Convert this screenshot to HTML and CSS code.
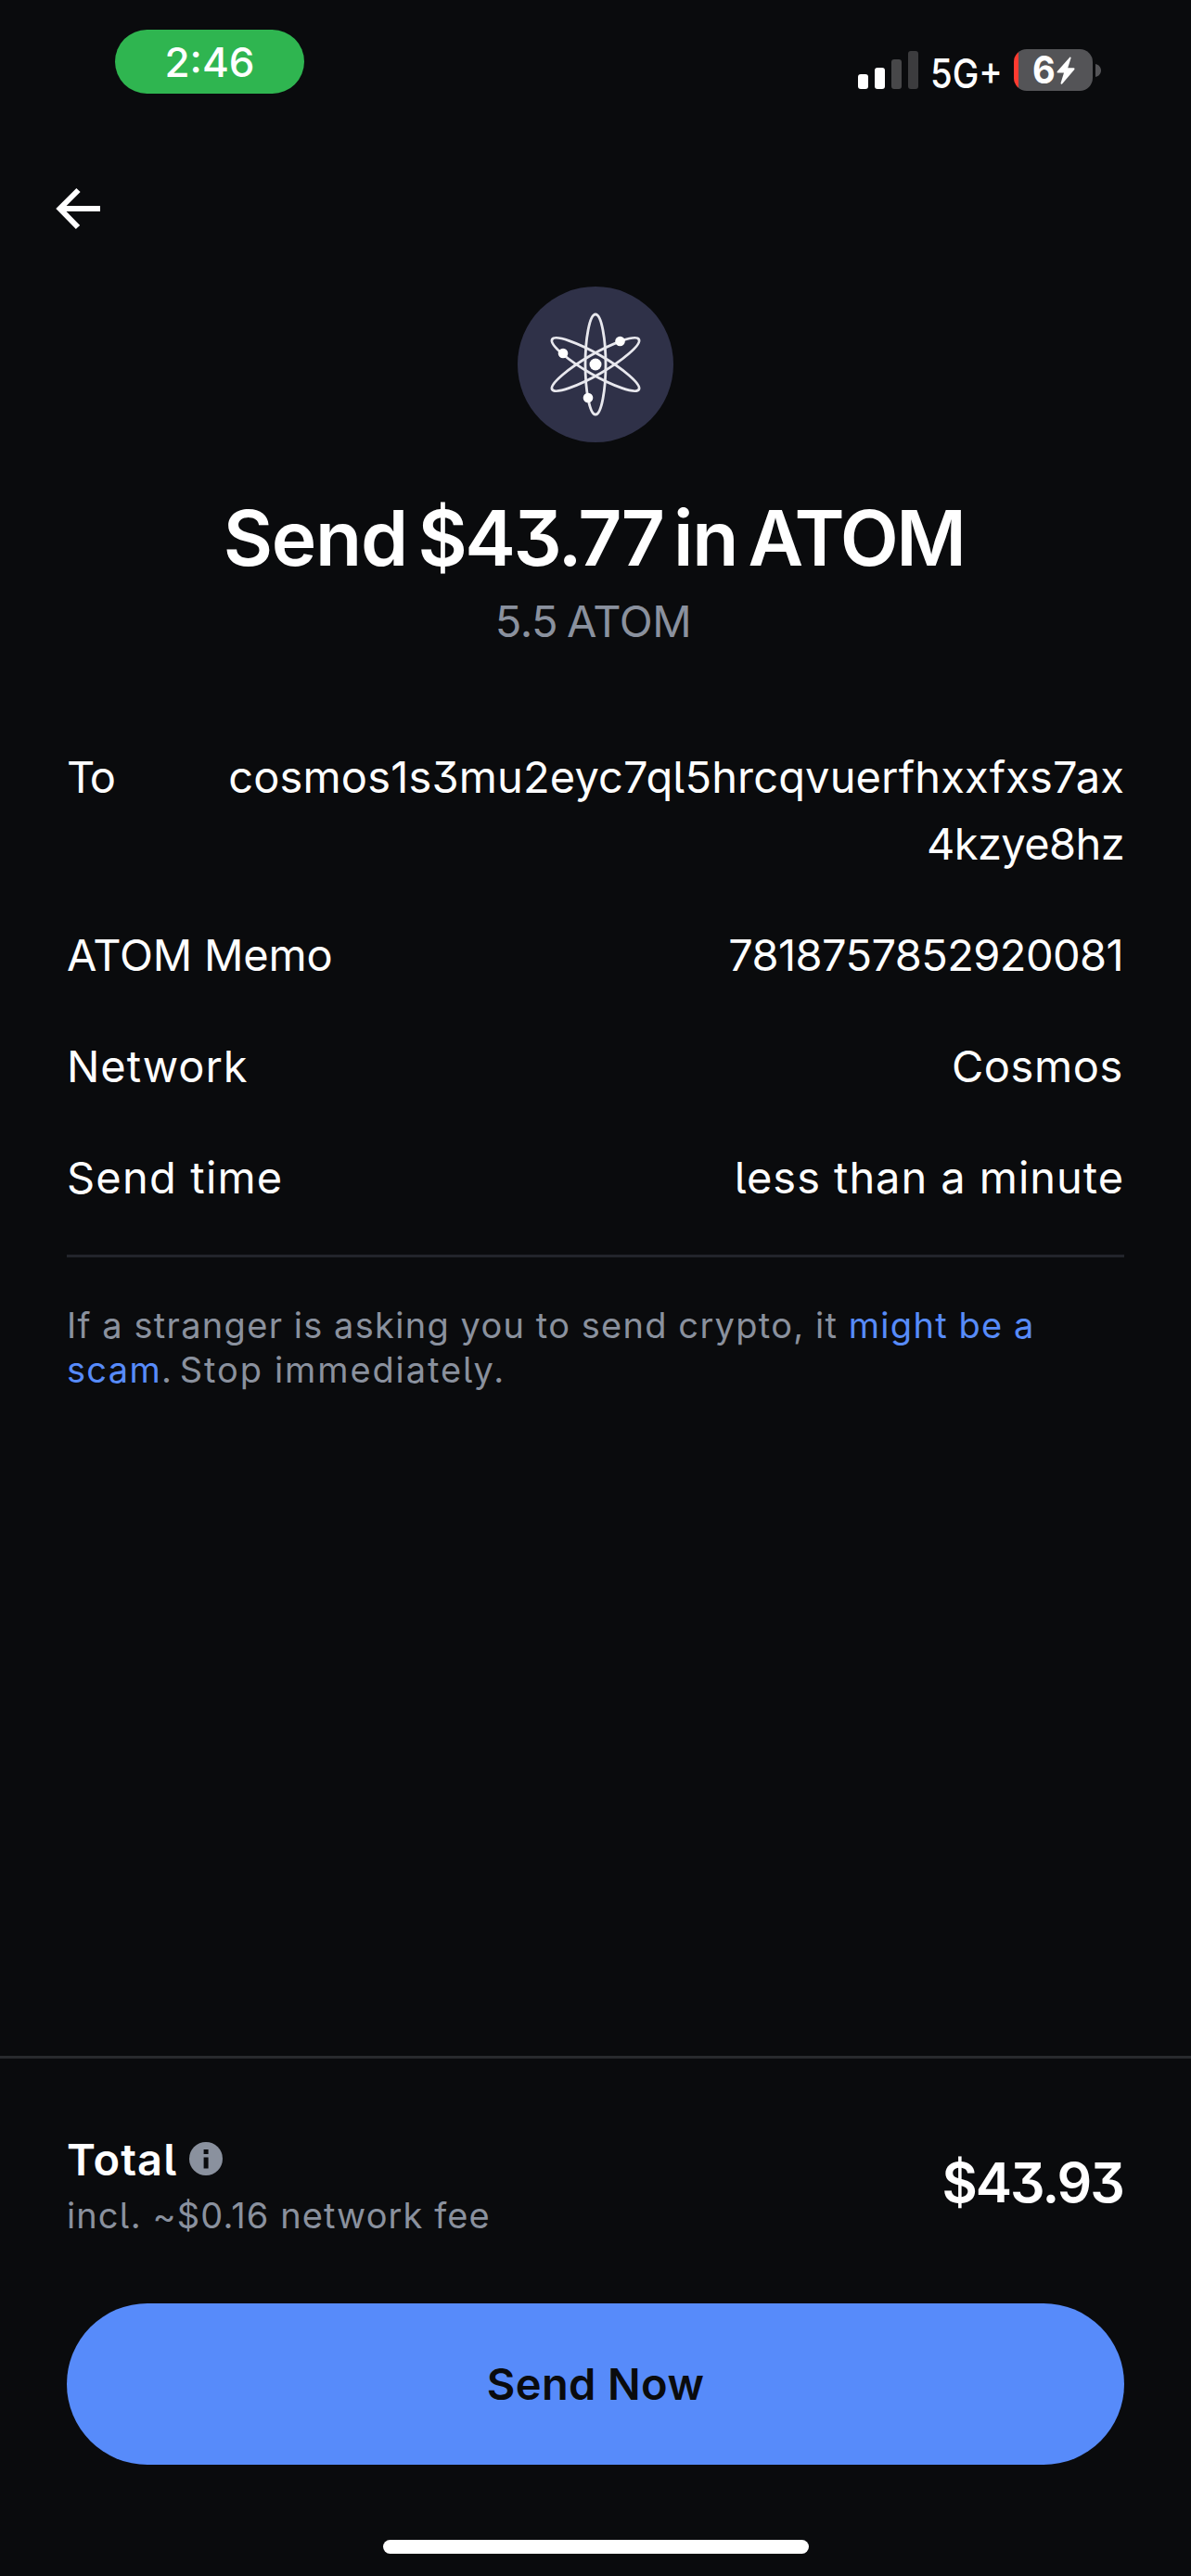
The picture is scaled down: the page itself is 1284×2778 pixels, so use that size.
FILE: index.html
```html
<!DOCTYPE html>
<html lang="en">
<head>
<meta charset="utf-8">
<title>Send ATOM</title>
<link rel="stylesheet" href="styles.css">
</head>
<body>
<div class="screen">
  <header class="status">
    <div class="clock">2:46</div>
    <div class="indicators">
      <svg class="signal" width="65" height="41" viewBox="0 0 65 41">
        <rect x="0" y="25" width="11" height="16" rx="3" fill="#fff"/>
        <rect x="18" y="18" width="11" height="23" rx="3" fill="#fff"/>
        <rect x="36" y="9" width="11" height="32" rx="3" fill="#474749"/>
        <rect x="54" y="0" width="11" height="41" rx="3" fill="#3c3c3e"/>
      </svg>
      <span class="carrier">5G+</span>
      <div class="battery">
        <div class="cell">
          <span class="percent">6</span>
          <svg class="bolt" width="20" height="30" viewBox="0 0 20 30"><path d="M14.5 .5 L.8 16 Q0 17.6 1.6 17.6 H8 L4.5 28.8 Q5 30.4 6.3 29.2 L19.3 14 Q20 12.2 18.4 12.2 H12.2 L15.6 1.6 Q15.6 .2 14.5 .5 Z" fill="#fff"/></svg>
        </div>
        <svg class="nub" width="6" height="14" viewBox="0 0 6 14"><path d="M0 0 C8 2 8 12 0 14 Z" fill="#545457"/></svg>
      </div>
    </div>
  </header>

  <nav class="nav">
    <svg width="49" height="46" viewBox="0 0 49 46" fill="none" stroke="#fff" stroke-width="6"><path d="M48 23 H6"/><path d="M24.5 3 L4.5 23 L24 43"/></svg>
  </nav>

  <main class="main">
    <section class="hero">
      <svg class="logo" width="168" height="168" viewBox="-84 -84 168 168">
        <circle r="84" fill="#2f3148"/>
        <g fill="none" stroke="#e8e8ee" stroke-width="2.8">
          <path id="orbit" d="M0 -54 C6.5 -54 11 -27 11 0 S6.5 54 0 54 S-11 27 -11 0 S-6.5 -54 0 -54 Z"/>
          <use href="#orbit" transform="rotate(60)"/>
          <use href="#orbit" transform="rotate(-60)"/>
        </g>
        <g fill="#fff">
          <circle r="6.5"/>
          <circle cx="26.5" cy="-25" r="5.3"/>
          <circle cx="-35" cy="-12" r="5.3"/>
          <circle cx="-8" cy="36" r="5.3"/>
        </g>
      </svg>
      <h1 class="title">Send <span class="tight">$43.77</span> in <span class="tight">ATOM</span></h1>
      <p class="subtitle">5.5 ATOM</p>
    </section>

    <dl class="details">
      <div class="row"><dt class="to">To</dt><dd class="address">cosmos1s3mu2eyc7ql5hrcqvuerfhxxfxs7ax<br><span class="tail">4kzye8hz</span></dd></div>
      <div class="row"><dt class="plain">ATOM Memo</dt><dd class="memo">7818757852920081</dd></div>
      <div class="row"><dt>Network</dt><dd class="network">Cosmos</dd></div>
      <div class="row"><dt class="time">Send time</dt><dd>less than a minute</dd></div>
    </dl>

    <p class="warning">If a stranger is asking you to send crypto, it <a class="link">might be a<br>scam</a>. <span class="stop">Stop immediately.</span></p>
  </main>

  <footer class="footer">
    <div class="summary">
      <div>
        <div class="total">Total
          <svg class="info" width="36" height="36" viewBox="0 0 36 36"><circle cx="18" cy="18" r="18" fill="#8a919e"/><path d="M15.6 8h5v5h-5zM15.6 16.5h5v12h-5z" fill="#0a0b0d"/></svg>
        </div>
        <div class="fee">incl. ~$0.16 network fee</div>
      </div>
      <div class="amount">$43.93</div>
    </div>
    <button class="send">Send Now</button>
    <div class="home"></div>
  </footer>
</div>
</body>
</html>
```
FILE: styles.css
```css
* { box-sizing: border-box; margin: 0; padding: 0; }

body {
  background: #0a0b0d;
  color: #fff;
  font-family: Inter, "Liberation Sans", sans-serif;
  font-feature-settings: "cv05", "cv09";
}

svg { display: block; flex: none; }

.screen {
  width: 1284px;
  height: 2778px;
  display: flex;
  flex-direction: column;
  overflow: hidden;
}

/* Status bar */
.status {
  height: 125px;
  padding: 32px 97px 0 124px;
  display: flex;
  justify-content: space-between;
  align-items: flex-start;
}
.clock {
  width: 204px;
  height: 69px;
  border-radius: 35px;
  background: #2fb550;
  font-size: 44px;
  font-weight: 500;
  line-height: 71px;
  text-align: center;
  font-feature-settings: normal;
}
.indicators { display: flex; padding-top: 21px; }
.signal { margin: 2px 13px 0 0; }
.carrier {
  width: 76px;
  margin-right: 14px;
  font-size: 44px;
  line-height: 52px;
  font-weight: 500;
  transform: scaleX(.87);
  transform-origin: left;
  white-space: nowrap;
}
.battery { display: flex; align-items: center; gap: 3px; height: 45px; }
.cell {
  width: 85px;
  height: 45px;
  border-radius: 14px;
  background: linear-gradient(to right, #ff3b30 5px, #545457 5px);
  display: flex;
  align-items: center;
  justify-content: center;
}
.percent {
  font-size: 41px;
  font-weight: 700;
  line-height: 45px;
  transform: scaleX(.93);
}

/* Navigation */
.nav { height: 184px; padding: 77px 0 0 60px; }

/* Heading */
.hero { display: flex; flex-direction: column; align-items: center; }
.title {
  margin-top: 56px;
  padding-right: 4px;
  font-size: 82px;
  line-height: 96px;
  font-weight: 600;
  letter-spacing: -1.2px;
  word-spacing: -8px;
  white-space: nowrap;
}
.tight { letter-spacing: -2.5px; }
.subtitle {
  margin-top: 5px;
  padding-right: 5px;
  font-size: 47px;
  line-height: 72px;
  letter-spacing: -.4px;
  word-spacing: -3px;
  color: #8a919e;
}

/* Details */
.main { flex: 1; padding: 0 72px; }
.details {
  margin-top: 96px;
  padding-bottom: 47px;
  border-bottom: 3px solid #22242b;
  display: flex;
  flex-direction: column;
  gap: 48px;
  font-size: 47px;
  line-height: 72px;
  letter-spacing: .95px;
}
.row { display: flex; justify-content: space-between; }
.row dd { text-align: right; white-space: nowrap; }
.row .to { letter-spacing: -2px; }
.row .address { letter-spacing: .15px; }
.row .tail { letter-spacing: -.6px; }
.row .plain { letter-spacing: -.2px; }
.row .memo { letter-spacing: -.6px; padding-right: 1px; }
.row .network { letter-spacing: .6px; padding-right: 1px; }
.row .time { letter-spacing: 1.2px; }

.warning {
  margin-top: 49px;
  font-size: 38px;
  line-height: 48px;
  letter-spacing: 1.3px;
  word-spacing: -.5px;
  color: #8a919e;
  white-space: nowrap;
}
.stop { letter-spacing: 1.9px; margin-left: -4px; }
.link { color: #578bfa; }

/* Footer */
.footer {
  height: 561px;
  border-top: 3px solid #282a2d;
  padding: 82px 72px 24px;
  display: flex;
  flex-direction: column;
}
.summary { display: flex; justify-content: space-between; height: 182px; }
.total {
  display: flex;
  gap: 13px;
  font-size: 47px;
  line-height: 54px;
  font-weight: 600;
  letter-spacing: 1.1px;
}
.info { margin-top: 8px; }
.fee {
  margin-top: 9px;
  font-size: 38px;
  line-height: 48px;
  letter-spacing: 1.1px;
  color: #8a919e;
}
.amount {
  margin-top: 16px;
  padding-right: 1px;
  font-size: 59px;
  line-height: 72px;
  font-weight: 600;
  letter-spacing: -2px;
}
.send {
  flex: none;
  height: 174px;
  padding-bottom: 1px;
  border: 0;
  border-radius: 87px;
  background: #578bfa;
  color: #0a0b0d;
  font: inherit;
  font-size: 47px;
  font-weight: 600;
  letter-spacing: .4px;
}
.home {
  flex: none;
  width: 459px;
  height: 15px;
  margin: auto auto 0;
  border-radius: 8px;
  background: #fff;
}
```
